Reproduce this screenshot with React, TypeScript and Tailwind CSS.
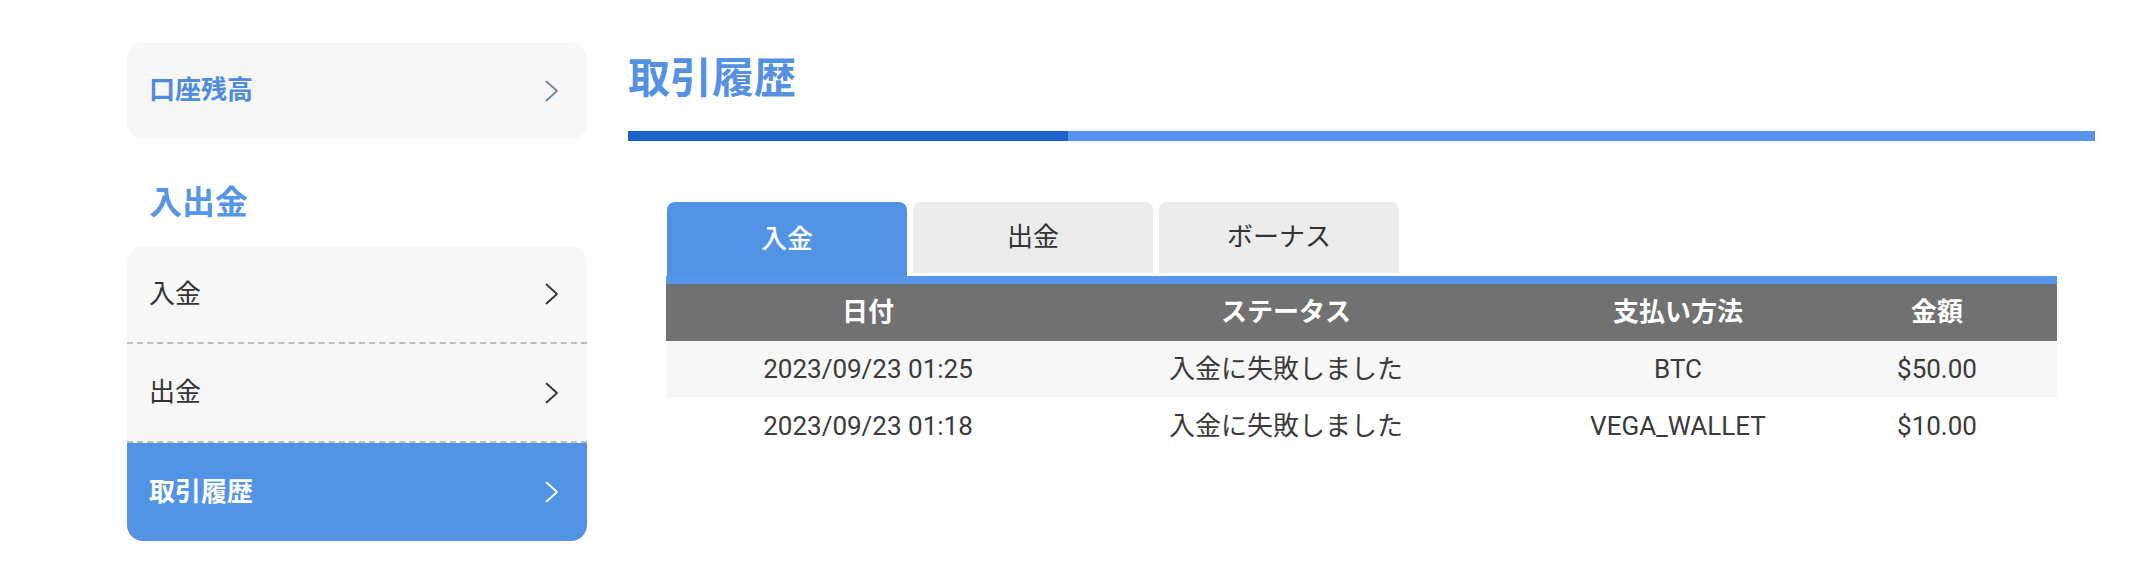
import React from "react";

const font = { fontFamily: "Roboto, 'Noto Sans CJK JP', sans-serif" };

function Chevron({ className }: { className?: string }) {
    return (
        <svg width="14" height="22" viewBox="0 0 14 22" fill="none" className={className}>
            <polyline points="1.5,1.5 12,11 1.5,20.5" stroke="currentColor" strokeWidth="1.8" strokeLinecap="round" strokeLinejoin="round" />
        </svg>
    );
}

const rows = [
    { date: "2023/09/23 01:25", status: "入金に失敗しました", method: "BTC", amount: "$50.00" },
    { date: "2023/09/23 01:18", status: "入金に失敗しました", method: "VEGA_WALLET", amount: "$10.00" },
];

export default function App() {
    return (
        <div className="flex min-h-[578px] w-[2136px] bg-white pl-[127px] pr-[41px] pt-[42px] text-[#333]" style={font}>
            {/* Sidebar */}
            <aside className="w-[460px] shrink-0">
                <div className="flex h-[97px] items-center justify-between rounded-[16px] bg-[#f7f7f7] pl-[22px] pr-[28px]">
                    <span className="text-[26px] font-bold text-[#4f8be0]">口座残高</span>
                    <Chevron className="text-[#6f86b0]" />
                </div>

                <h2 className="mt-[44px] mb-[23px] h-[40px] pl-[22px] text-[33px] font-bold leading-[40px] text-[#5596e6]">入出金</h2>

                <div className="overflow-hidden rounded-[16px] bg-[#f7f7f7]">
                    <div className="flex h-[98px] items-center justify-between border-b-2 border-dashed border-[#bdbdbd] pl-[22px] pr-[28px]">
                        <span className="text-[26px]">入金</span>
                        <Chevron className="text-[#333]" />
                    </div>
                    <div className="flex h-[99px] items-center justify-between border-b-2 border-dashed border-[#bdbdbd] pl-[22px] pr-[28px]">
                        <span className="text-[26px]">出金</span>
                        <Chevron className="text-[#333]" />
                    </div>
                    <div className="flex h-[98px] items-center justify-between bg-[#5393e6] pl-[22px] pr-[28px]">
                        <span className="text-[26px] font-bold text-white">取引履歴</span>
                        <Chevron className="text-white" />
                    </div>
                </div>
            </aside>

            {/* Main */}
            <main className="ml-[41px] flex-1">
                <div className="flex h-[74px] items-center">
                    <h1 className="text-[42px] font-bold leading-none text-[#5591e3]">取引履歴</h1>
                </div>
                <div className="mt-[15px] flex h-[10px]">
                    <div className="w-[440px] bg-[#1c63c6]" />
                    <div className="flex-1 bg-[#5596ec]" />
                </div>

                <div className="mx-[38px] mt-[61px]">
                    <div className="ml-px flex items-end gap-[6px]">
                        <div className="flex h-[74px] w-[240px] items-center justify-center rounded-t-[8px] bg-[#5393e6] text-[26px] font-medium text-white">入金</div>
                        <div className="mb-[3px] flex h-[71px] w-[240px] items-center justify-center rounded-t-[8px] bg-[#ececec] text-[26px]">出金</div>
                        <div className="mb-[3px] flex h-[71px] w-[240px] items-center justify-center rounded-t-[8px] bg-[#ececec] text-[26px]">ボーナス</div>
                    </div>
                    <div className="h-[8px] bg-[#5596ec]" />

                    <div className="grid h-[57px] grid-cols-[404px_432px_352px_166px] items-center bg-[#717171] text-center text-[26px] font-bold text-white">
                        <span>日付</span>
                        <span>ステータス</span>
                        <span>支払い方法</span>
                        <span>金額</span>
                    </div>
                    {rows.map((r, i) => (
                        <div
                            key={r.date}
                            className={
                                "grid h-[57px] grid-cols-[404px_432px_352px_166px] items-center text-center text-[26px] text-[#3a3a3a] " +
                                (i === 0 ? "bg-[#f7f7f7]" : "bg-white")
                            }
                        >
                            <span>{r.date}</span>
                            <span>{r.status}</span>
                            <span>{r.method}</span>
                            <span>{r.amount}</span>
                        </div>
                    ))}
                </div>
            </main>
        </div>
    );
}
